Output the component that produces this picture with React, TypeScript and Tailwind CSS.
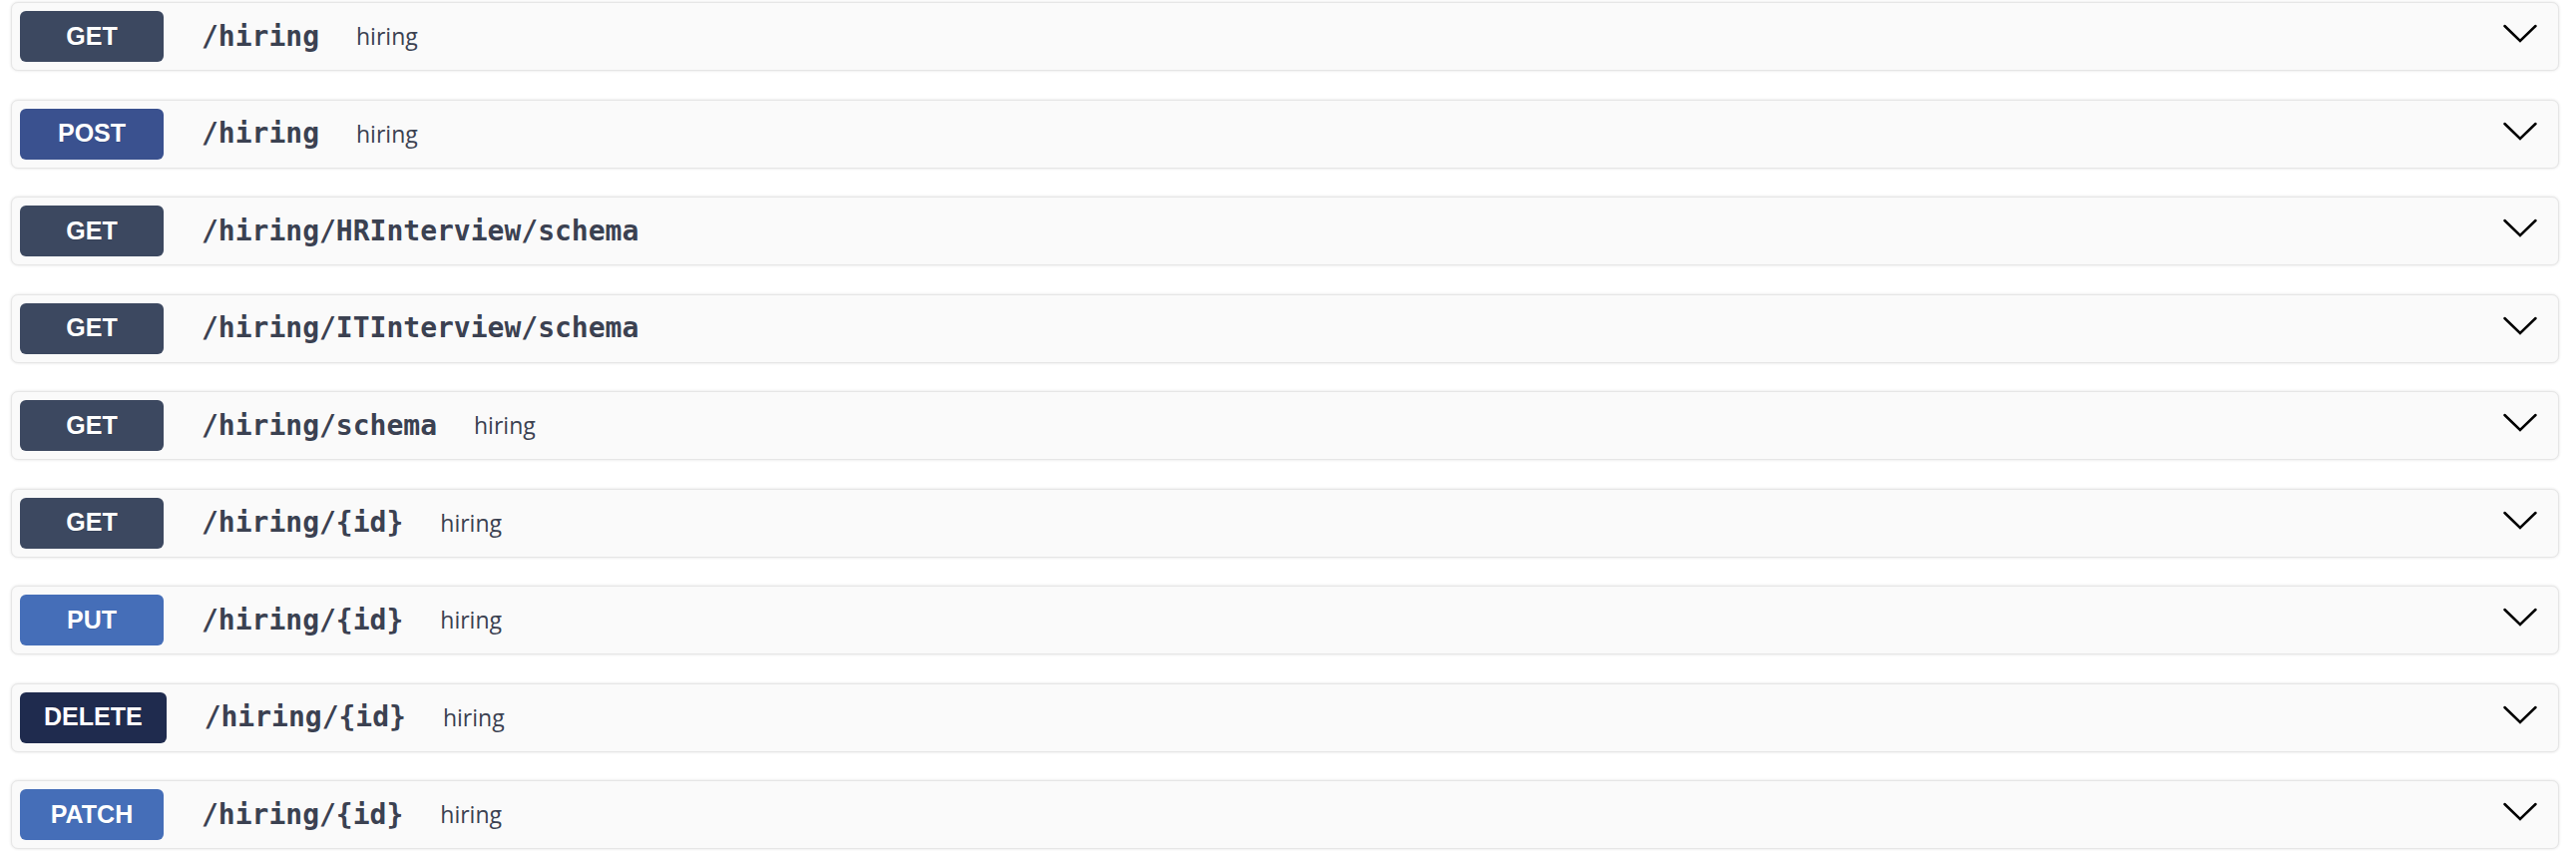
// API operations list — collapsed endpoint summaries

const METHOD_STYLES: Record<string, string> = {
  GET: 'bg-[#3c4860]',
  POST: 'bg-[#3a518f]',
  PUT: 'bg-[#456eb8]',
  DELETE: 'bg-[#1f2b4e]',
  PATCH: 'bg-[#456eb8]',
};

const operations = [
  { method: 'GET', path: '/hiring', tag: 'hiring' },
  { method: 'POST', path: '/hiring', tag: 'hiring' },
  { method: 'GET', path: '/hiring/HRInterview/schema', tag: '' },
  { method: 'GET', path: '/hiring/ITInterview/schema', tag: '' },
  { method: 'GET', path: '/hiring/schema', tag: 'hiring' },
  { method: 'GET', path: '/hiring/{id}', tag: 'hiring' },
  { method: 'PUT', path: '/hiring/{id}', tag: 'hiring' },
  { method: 'DELETE', path: '/hiring/{id}', tag: 'hiring' },
  { method: 'PATCH', path: '/hiring/{id}', tag: 'hiring' },
];

function Chevron() {
  return (
    <svg width="34" height="20" viewBox="0 0 34 20" fill="none" className="mb-[7px] shrink-0">
      <polyline
        points="1.5,3 17,18 32.5,3"
        stroke="#000"
        strokeWidth="2.5"
        strokeLinecap="round"
        strokeLinejoin="miter"
      />
    </svg>
  );
}

function OperationRow({ method, path, tag }: { method: string; path: string; tag: string }) {
  return (
    <div className="flex h-[69px] items-center rounded-[7px] border border-[#e6e6e6] bg-[#fafafa] pl-[8px] pr-[21px] shadow-[0_0_3px_rgba(0,0,0,0.12)] mb-[28.5px]">
      <span
        className={`${METHOD_STYLES[method]} flex h-[51px] min-w-[144px] items-center justify-center rounded-[6px] px-[24px] text-[25px] font-bold text-white [text-shadow:0_1px_0_rgba(0,0,0,0.1)]`}
        style={{ fontFamily: '"Liberation Sans", Arial, sans-serif' }}
      >
        {method}
      </span>
      <span
        className="ml-[38px] text-[28px] font-bold text-[#3b4151]"
        style={{ fontFamily: '"DejaVu Sans Mono", "Liberation Mono", monospace' }}
      >
        {path}
      </span>
      {tag && (
        <span
          className="ml-[37px] text-[23px] text-[#3b4151]"
          style={{ fontFamily: '"Open Sans", "Noto Sans", sans-serif' }}
        >
          {tag}
        </span>
      )}
      <div className="flex-1" />
      <Chevron />
    </div>
  );
}

export default function App() {
  return (
    <div className="min-h-screen bg-white pl-[11px] pr-[17px] pt-[2px]">
      {operations.map((op, i) => (
        <OperationRow key={i} {...op} />
      ))}
    </div>
  );
}
